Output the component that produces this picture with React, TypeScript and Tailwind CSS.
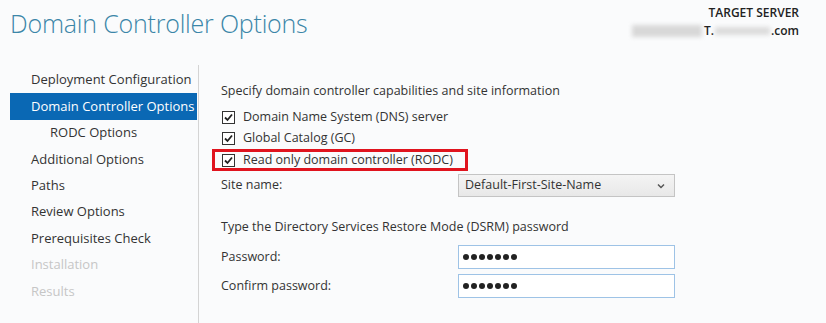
import React from "react";

const Check = () => (
  <span className="w-[13px] h-[13px] border border-[#333] bg-white flex items-center justify-center shrink-0">
    <svg width="11" height="11" viewBox="0 0 11 11">
      <path d="M2 5.5 L4.5 8 L9 2.5" fill="none" stroke="#222" strokeWidth="1.8" />
    </svg>
  </span>
);

const navItems: { label: string; active?: boolean; indent?: boolean; disabled?: boolean }[] = [
  { label: "Deployment Configuration" },
  { label: "Domain Controller Options", active: true },
  { label: "RODC Options", indent: true },
  { label: "Additional Options" },
  { label: "Paths" },
  { label: "Review Options" },
  { label: "Prerequisites Check" },
  { label: "Installation", disabled: true },
  { label: "Results", disabled: true },
];

const Dots = () => (
  <div className="flex items-center gap-[2px]">
    {[0, 1, 2, 3, 4, 5, 6].map((i) => (
      <span key={i} className="w-[6px] h-[6px] rounded-full bg-[#222]" />
    ))}
  </div>
);

export default function App() {
  return (
    <div
      className="w-[826px] h-[323px] bg-[#fafbfc] text-[#333] overflow-hidden relative"
      style={{ fontFamily: '"Open Sans", "Noto Sans", sans-serif' }}
    >
      <div className="flex justify-between items-start h-[65px]">
        <div className="pl-[10px] pt-[7px] text-[25px] font-light text-[#3b86a8] leading-[32px] tracking-[-0.2px]">
          Domain Controller Options
        </div>
        <div className="pr-[27px] pt-[4px] flex flex-col items-end text-[12px] leading-[18px]">
          <div className="font-semibold text-[#222]">TARGET SERVER</div>
          <div className="flex items-center font-semibold text-[#222]">
            <span className="inline-block w-[70px] h-[12px] bg-[#d8d8d8] blur-[2px] mr-[2px]" />
            <span>T.</span>
            <span className="inline-block w-[55px] h-[8px] bg-[#dcdcdc] blur-[2px] mx-[1px]" />
            <span>.com</span>
          </div>
        </div>
      </div>
      <div className="flex">
        <div className="w-[199px] border-r border-[#d4d4d4] h-[258px] pt-[2px] pl-[10px] pr-[1px]">
          {navItems.map((it) => (
            <div
              key={it.label}
              className={
                "h-[26.4px] flex items-center text-[13px] whitespace-nowrap " +
                (it.active ? "bg-[#0a68b4] text-white " : "") +
                (it.disabled ? "text-[#c6c6c6] " : "") +
                (it.indent ? "pl-[40px]" : "pl-[21px]")
              }
            >
              {it.label}
            </div>
          ))}
        </div>
        <div className="pl-[22px] pt-[17px] text-[12.5px] flex-1">
          <div className="h-[18px] leading-[18px]">Specify domain controller capabilities and site information</div>
          <div className="mt-[7px] flex flex-col">
            <div className="h-[21px] flex items-center gap-[8px] pl-[1px]">
              <Check />
              <span>Domain Name System (DNS) server</span>
            </div>
            <div className="h-[21px] flex items-center gap-[8px] pl-[1px]">
              <Check />
              <span>Global Catalog (GC)</span>
            </div>
            <div className="h-[22px] w-[256px] -ml-[9px] border-[3px] border-[#e0141e] flex items-center gap-[8px] pl-[7px]">
              <Check />
              <span>Read only domain controller (RODC)</span>
            </div>
          </div>
          <div className="mt-[3px] flex items-center h-[23px]">
            <span className="w-[237px]">Site name:</span>
            <div className="w-[217px] h-[23px] border border-[#c4c4c4] bg-gradient-to-b from-[#f4f4f4] to-[#e8e8e8] flex items-center justify-between pl-[6px] pr-[9px]">
              <span>Default-First-Site-Name</span>
              <svg width="8" height="6" viewBox="0 0 8 6">
                <path d="M1 1.5 L4 4.5 L7 1.5" fill="none" stroke="#555" strokeWidth="1.5" />
              </svg>
            </div>
          </div>
          <div className="mt-[21px] h-[18px] leading-[18px]">Type the Directory Services Restore Mode (DSRM) password</div>
          <div className="mt-[9px] flex items-center h-[24px]">
            <span className="w-[237px]">Password:</span>
            <div className="w-[217px] h-[24px] border border-[#9ec3e6] bg-white flex items-center pl-[4px]">
              <Dots />
            </div>
          </div>
          <div className="mt-[5px] flex items-center h-[24px]">
            <span className="w-[237px]">Confirm password:</span>
            <div className="w-[217px] h-[24px] border border-[#9ec3e6] bg-white flex items-center pl-[4px]">
              <Dots />
            </div>
          </div>
        </div>
      </div>
    </div>
  );
}
